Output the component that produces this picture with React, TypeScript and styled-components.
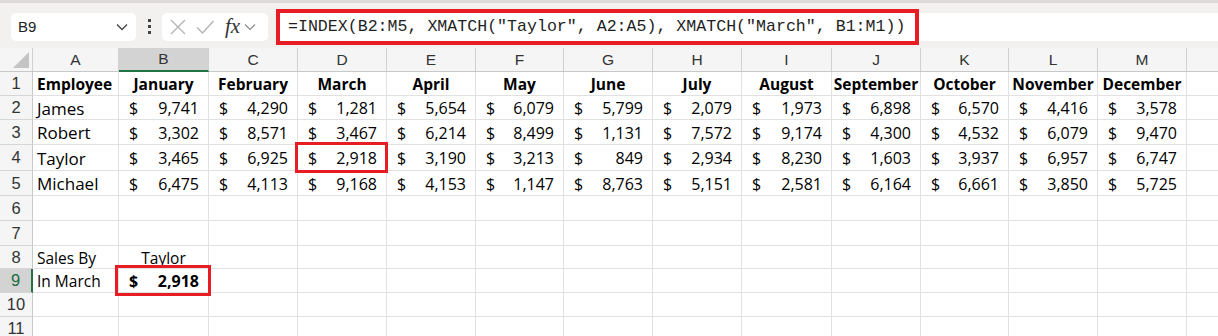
import styled, { createGlobalStyle } from 'styled-components';

const GlobalStyle = createGlobalStyle`
  body {
    margin: 0;
    background: #ffffff;
    font-family: "Liberation Sans", Arial, sans-serif;
    overflow: hidden;
  }
`;

const COLS = ['A', 'B', 'C', 'D', 'E', 'F', 'G', 'H', 'I', 'J', 'K', 'L', 'M', ''];
const WIDTHS = [33, 86, 90, 89, 89, 89, 88, 89, 89, 90, 89, 88, 89, 89, 40];
const MONTHS = ['January', 'February', 'March', 'April', 'May', 'June', 'July', 'August', 'September', 'October', 'November', 'December'];

const DATA: [string, ...number[]][] = [
  ['James', 9741, 4290, 1281, 5654, 6079, 5799, 2079, 1973, 6898, 6570, 4416, 3578],
  ['Robert', 3302, 8571, 3467, 6214, 8499, 1131, 7572, 9174, 4300, 4532, 6079, 9470],
  ['Taylor', 3465, 6925, 2918, 3190, 3213, 849, 2934, 8230, 1603, 3937, 6957, 6747],
  ['Michael', 6475, 4113, 9168, 4153, 1147, 8763, 5151, 2581, 6164, 6661, 3850, 5725],
];

const ROW_HEIGHTS = [24, 24, 25, 26, 25, 25, 25, 23, 24, 24, 24, 24];

const fmt = (n: number) => n.toLocaleString('en-US');

function App() {
  return <Page>
    <GlobalStyle />
    <Toolbar>
      <NameBox>
        <span>B9</span>
        <svg width="12" height="8" viewBox="0 0 12 8"><path d="M1 1.5 L6 6.5 L11 1.5" fill="none" stroke="#444" strokeWidth="1.3" /></svg>
      </NameBox>
      <Dots>
        <i /><i /><i />
      </Dots>
      <FuncBox>
        <svg width="18" height="18" viewBox="0 0 18 18"><path d="M2 2 L16 16 M16 2 L2 16" stroke="#b4b4b4" strokeWidth="1.4" /></svg>
        <svg width="20" height="18" viewBox="0 0 20 18"><path d="M2 9.5 L7.5 15 L18.5 3" fill="none" stroke="#b4b4b4" strokeWidth="1.4" /></svg>
        <Fx>fx</Fx>
        <svg width="12" height="8" viewBox="0 0 12 8"><path d="M1 1.5 L6 6.5 L11 1.5" fill="none" stroke="#8a8a8a" strokeWidth="1.2" /></svg>
      </FuncBox>
      <FormulaField>
        <FormulaText>=INDEX(B2:M5, XMATCH("Taylor", A2:A5), XMATCH("March", B1:M1))</FormulaText>
        <FormulaMark />
      </FormulaField>
    </Toolbar>

    <Sheet>
      <HeaderRow>
        <Corner $w={WIDTHS[0]}>
          <svg width="16" height="16" viewBox="0 0 16 16"><polygon points="0,16 16,0 16,16" fill="#c4c4c4" /></svg>
        </Corner>
        {COLS.map((c, i) => (
          <ColHead key={i} $w={WIDTHS[i + 1]} $active={c === 'B'}>{c}</ColHead>
        ))}
      </HeaderRow>

      <Row $h={ROW_HEIGHTS[0]}>
        <RowHead $w={WIDTHS[0]}>1</RowHead>
        <Cell $w={WIDTHS[1]} $bold>Employee</Cell>
        {MONTHS.map((m, i) => (
          <Cell key={m} $w={WIDTHS[i + 2]} $bold $center>{m}</Cell>
        ))}
        <Cell $w={WIDTHS[14]} />
      </Row>

      {DATA.map(([name, ...vals], r) => (
        <Row key={name} $h={ROW_HEIGHTS[r + 1]}>
          <RowHead $w={WIDTHS[0]}>{r + 2}</RowHead>
          <Cell $w={WIDTHS[1]} $large>{name}</Cell>
          {vals.map((v, i) => (
            <MoneyCell key={i} $w={WIDTHS[i + 2]}>
              <span>$</span><span>{fmt(v)}</span>
              {r === 2 && i === 2 && <CellMark $inset={3} />}
            </MoneyCell>
          ))}
          <Cell $w={WIDTHS[14]} />
        </Row>
      ))}

      {[6, 7, 8, 9, 10, 11].map((n) => (
        <Row key={n} $h={ROW_HEIGHTS[n - 1]}>
          <RowHead $w={WIDTHS[0]} $active={n === 9}>{n}</RowHead>
          {COLS.map((c, i) => {
            const w = WIDTHS[i + 1];
            if (n === 8 && c === 'A') return <Cell key={c} $w={w}>Sales By</Cell>;
            if (n === 8 && c === 'B') return <Cell key={c} $w={w} $center>Taylor</Cell>;
            if (n === 9 && c === 'A') return <Cell key={c} $w={w}>In March</Cell>;
            if (n === 9 && c === 'B') return (
              <MoneyCell key={c} $w={w} $bold>
                <span>$</span><span>2,918</span>
                <CellMark $inset={4} />
              </MoneyCell>
            );
            return <Cell key={i} $w={w} />;
          })}
        </Row>
      ))}
    </Sheet>
  </Page>;
}
export default App;

const Page = styled.div`
  width: 1218px;
  height: 336px;
  overflow: hidden;
  background: #ffffff;
`;

const Toolbar = styled.div`
  display: flex;
  align-items: center;
  height: 48px;
  box-sizing: border-box;
  padding: 2px 0 0 11px;
  background: #f3f0f0;
  border-top: 3px solid #dedada;
`;

const NameBox = styled.div`
  display: flex;
  align-items: center;
  justify-content: space-between;
  width: 125px;
  height: 28px;
  box-sizing: border-box;
  padding: 0 8px 0 7px;
  background: #ffffff;
  border-radius: 5px;
  font-size: 15px;
  color: #222;
`;

const Dots = styled.div`
  display: flex;
  flex-direction: column;
  gap: 3px;
  margin: 0 11px 0 12px;
  i {
    display: block;
    width: 3px;
    height: 3px;
    background: #444;
  }
`;

const FuncBox = styled.div`
  display: flex;
  align-items: center;
  gap: 8px;
  width: 106px;
  height: 28px;
  box-sizing: border-box;
  padding: 0 4px 0 7px;
  background: #ffffff;
  border-radius: 5px;
`;

const Fx = styled.span`
  font-family: "Liberation Serif", "Times New Roman", serif;
  font-style: italic;
  font-size: 21px;
  color: #333;
  margin-left: 2px;
  margin-right: -4px;
  line-height: 1;
`;

const FormulaField = styled.div`
  position: relative;
  flex: 1;
  display: flex;
  align-items: center;
  height: 28px;
  margin-left: 8px;
  background: #ffffff;
`;

const FormulaText = styled.span`
  font-family: "Liberation Mono", "Courier New", monospace;
  font-size: 16.6px;
  color: #1f1f1f;
  padding-left: 12px;
  white-space: pre;
`;

const FormulaMark = styled.div`
  position: absolute;
  left: 0;
  top: -4px;
  bottom: -4px;
  width: 643px;
  box-sizing: border-box;
  border: 4px solid #e81c24;
`;

const Sheet = styled.div`
  display: flex;
  flex-direction: column;
`;

const HeaderRow = styled.div`
  display: flex;
  height: 24px;
  background: #f5f5f5;
  border-bottom: 1px solid #c8c8c8;
  box-sizing: border-box;
`;

const Corner = styled.div<{ $w: number }>`
  display: flex;
  align-items: flex-end;
  justify-content: flex-end;
  width: ${(p) => p.$w}px;
  flex: none;
  box-sizing: border-box;
  padding: 0 3px 3px 0;
  border-right: 1px solid #d0d0d0;
`;

const ColHead = styled.div<{ $w: number; $active?: boolean }>`
  display: flex;
  align-items: center;
  justify-content: center;
  width: ${(p) => p.$w}px;
  flex: none;
  box-sizing: border-box;
  font-size: 15.5px;
  color: #333;
  border-right: 1px solid #d0d0d0;
  background: ${(p) => (p.$active ? '#d3d3d3' : 'transparent')};
  border-bottom: ${(p) => (p.$active ? '2px solid #217346' : 'none')};
  margin-bottom: ${(p) => (p.$active ? '-1px' : '0')};
`;

const Row = styled.div<{ $h: number }>`
  display: flex;
  height: ${(p) => p.$h}px;
  flex: none;
`;

const RowHead = styled.div<{ $w: number; $active?: boolean }>`
  display: flex;
  align-items: center;
  justify-content: center;
  width: ${(p) => p.$w}px;
  flex: none;
  box-sizing: border-box;
  font-size: 16.5px;
  color: ${(p) => (p.$active ? '#1d6b3f' : '#333')};
  background: ${(p) => (p.$active ? '#d3d3d3' : '#f5f5f5')};
  border-bottom: 1px solid #d6d6d6;
  border-right: ${(p) => (p.$active ? '2px solid #217346' : '1px solid #c8c8c8')};
`;

const Cell = styled.div<{ $w: number; $bold?: boolean; $center?: boolean; $large?: boolean }>`
  position: relative;
  display: flex;
  align-items: center;
  justify-content: ${(p) => (p.$center ? 'center' : 'flex-start')};
  width: ${(p) => p.$w}px;
  flex: none;
  box-sizing: border-box;
  padding: 1px 4px 0;
  font-family: "Open Sans", "Liberation Sans", sans-serif;
  font-size: ${(p) => (p.$large ? 17 : 15.5)}px;
  font-weight: ${(p) => (p.$bold ? 700 : 400)};
  color: #000;
  white-space: nowrap;
  border-right: 1px solid #e1e1e1;
  border-bottom: 1px solid #e1e1e1;
`;

const MoneyCell = styled(Cell)`
  justify-content: space-between;
  padding: 1px 9px 0 10px;
  font-size: 16px;
`;

const CellMark = styled.div<{ $inset: number }>`
  position: absolute;
  left: -${(p) => p.$inset}px;
  right: -${(p) => p.$inset - 1}px;
  top: -${(p) => p.$inset}px;
  bottom: -${(p) => p.$inset}px;
  border: 3px solid #e81c24;
  pointer-events: none;
  z-index: 2;
`;
